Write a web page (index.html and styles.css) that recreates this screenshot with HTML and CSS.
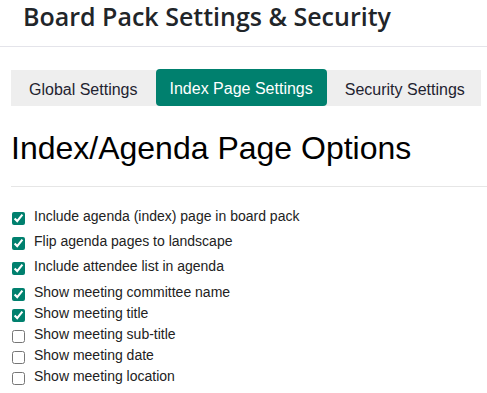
FILE: index.html
```html
<!DOCTYPE html>
<html lang="en">
<head>
    <meta charset="UTF-8">
    <meta name="viewport" content="width=device-width, initial-scale=1.0">
    <title>Board Pack Settings &amp; Security</title>
    <link rel="stylesheet" href="styles.css">
</head>
<body>
    <header class="page-header">
        <h1>Board Pack Settings &amp; Security</h1>
    </header>

    <main class="content">
        <nav class="tabs">
            <a class="tab">Global Settings</a>
            <a class="tab active">Index Page Settings</a>
            <a class="tab">Security Settings</a>
        </nav>

        <h2 class="section-title">Index/Agenda Page Options</h2>

        <div class="options main-options">
            <label class="option"><input type="checkbox" checked> Include agenda (index) page in board pack</label>
            <label class="option"><input type="checkbox" checked> Flip agenda pages to landscape</label>
            <label class="option"><input type="checkbox" checked> Include attendee list in agenda</label>
        </div>

        <div class="options show-options">
            <label class="option"><input type="checkbox" checked> Show meeting committee name</label>
            <label class="option"><input type="checkbox" checked> Show meeting title</label>
            <label class="option"><input type="checkbox"> Show meeting sub-title</label>
            <label class="option"><input type="checkbox"> Show meeting date</label>
            <label class="option"><input type="checkbox"> Show meeting location</label>
        </div>
    </main>
</body>
</html>
```

FILE: styles.css
```css
body {
    font-family: Arial, "Liberation Sans", sans-serif;
    margin: 0;
    background: white;
    color: #222;
}
.page-header {
    padding: 0 23px 13px;
    border-bottom: 1px solid #e4e4ea;
}
.page-header h1 {
    margin: 0;
    font-family: "Open Sans", sans-serif;
    font-weight: 600;
    font-size: 25px;
    line-height: 33px;
    color: #212529;
}
.content {
    padding: 0 0 0 11px;
}
.tabs {
    display: flex;
    margin: 23px 6px 0 0;
    background: #eeeeee;
}
.tab {
    padding: 4px 18px 0;
    line-height: 32px;
    font-size: 16px;
    color: #1f2330;
    white-space: nowrap;
    cursor: pointer;
}
.tab.active {
    margin-top: -1px;
    padding: 2px 14px 0;
    line-height: 35px;
    background: #00806e;
    color: white;
    border-radius: 4px;
}
.section-title {
    margin: 24px 0 0;
    padding: 0 0 19px;
    font-size: 32px;
    font-weight: normal;
    color: #000;
    border-bottom: 1px solid #e6e6e6;
}
.options {
    display: flex;
    flex-direction: column;
    font-size: 14px;
}
.main-options {
    margin-top: 16px;
}
.main-options .option {
    height: 25px;
}
.show-options {
    margin-top: 3px;
}
.show-options .option {
    height: 21px;
}
.option {
    display: flex;
    align-items: center;
    gap: 9px;
    padding-left: 1px;
}
.option input {
    width: 13px;
    height: 13px;
    margin: 5px 0 0;
    accent-color: #00806e;
}
```
